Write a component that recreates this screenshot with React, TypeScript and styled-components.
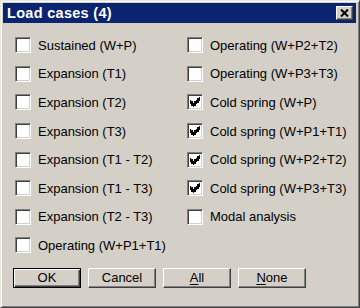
import {createGlobalStyle} from 'styled-components';
import styled from 'styled-components';

const GlobalStyle = createGlobalStyle`
	html, body {
		margin     : 0;
		padding    : 0;
		background : #d4d0c8;
	}
	body {
		font-family : "Liberation Sans", Arial, sans-serif;
	}
`;

const Window = styled.div`
	display          : flex;
	flex-direction   : column;
	box-sizing       : border-box;
	width            : 360px;
	height           : 308px;
	background-color : #d4d0c8;
	border-top       : 1px solid #e8e6e1;
	border-left      : 1px solid #e8e6e1;
	border-right     : 1px solid #404040;
	border-bottom    : 1px solid #404040;
	box-shadow       : inset 1px 1px 0 #ffffff, inset -1px -1px 0 #808080;
	padding          : 2px 3px 3px 2px;
`;

const TitleBar = styled.div`
	display          : flex;
	align-items      : center;
	justify-content  : space-between;
	height           : 20px;
	padding          : 0 3px 0 4px;
	background-color : #0b2470;
	color            : #ffffff;
`;

const Title = styled.span`
	font-size      : 14.5px;
	font-weight    : bold;
	letter-spacing : 0.3px;
`;

const CloseButton = styled.div`
	display          : flex;
	align-items      : center;
	justify-content  : center;
	width            : 17px;
	height           : 14px;
	background-color : #d4d0c8;
	border-top       : 1px solid #ffffff;
	border-left      : 1px solid #ffffff;
	border-right     : 1px solid #404040;
	border-bottom    : 1px solid #404040;
	box-shadow       : inset -1px -1px 0 #808080;
	box-sizing       : border-box;
`;

const Body = styled.div`
	display               : grid;
	grid-template-columns : 172px 1fr;
	padding               : 8px 0 0 12px;
`;

const Column = styled.div`
	display        : flex;
	flex-direction : column;
`;

const Row = styled.label`
	display     : flex;
	align-items : center;
	gap         : 7px;
	height      : 28.6px;
	font-size   : 13px;
	color       : #000000;
	white-space : nowrap;
`;

const Box = styled.span`
	display          : flex;
	align-items      : center;
	justify-content  : center;
	box-sizing       : border-box;
	width            : 16px;
	height           : 16px;
	background-color : #ffffff;
	border-top       : 1px solid #808080;
	border-left      : 1px solid #808080;
	border-right     : 1px solid #ffffff;
	border-bottom    : 1px solid #ffffff;
	box-shadow       : inset 1px 1px 0 #404040, inset -1px -1px 0 #d4d0c8;
`;

const ButtonBar = styled.div`
	display : flex;
	gap     : 7px;
	padding : 8px 0 0 10px;
`;

const PushButton = styled.div<{ $default?: boolean }>`
	display          : flex;
	align-items      : center;
	justify-content  : center;
	box-sizing       : border-box;
	width            : 68px;
	height           : 20px;
	font-size        : 13px;
	color            : #000000;
	background-color : #d4d0c8;
	border-style     : solid;
	border-width     : 1px;
	border-color     : ${({$default}) => $default ? '#000000' : '#ffffff #404040 #404040 #ffffff'};
	box-shadow       : ${({$default}) => $default
		? 'inset 1px 1px 0 #ffffff, inset -1px -1px 0 #404040, inset -2px -2px 0 #808080'
		: 'inset -1px -1px 0 #808080'};
`;

const Mnemonic = styled.u`
	text-decoration       : underline;
	text-underline-offset : 2px;
`;

const Check = () => <svg width="10" height="10" viewBox="0 0 7 7" shapeRendering="crispEdges">
	<path d="M0 2h1v1h1v1h1v-1h1v-1h1v-1h1v-1h1v3h-1v1h-1v1h-1v1h-1v1h-1v-1h-1v-1h-1v-1h-1z" fill="#000"/>
</svg>;

const CheckItem = (props: { label: string; checked?: boolean }) => {
	const {label, checked = false} = props;
	return <Row>
		<Box>{checked ? <Check/> : null}</Box>
		<span>{label}</span>
	</Row>;
};

const left = [
	'Sustained (W+P)',
	'Expansion (T1)',
	'Expansion (T2)',
	'Expansion (T3)',
	'Expansion (T1 - T2)',
	'Expansion (T1 - T3)',
	'Expansion (T2 - T3)',
	'Operating (W+P1+T1)'
];

const right = [
	{label: 'Operating (W+P2+T2)', checked: false},
	{label: 'Operating (W+P3+T3)', checked: false},
	{label: 'Cold spring (W+P)', checked: true},
	{label: 'Cold spring (W+P1+T1)', checked: true},
	{label: 'Cold spring (W+P2+T2)', checked: true},
	{label: 'Cold spring (W+P3+T3)', checked: true},
	{label: 'Modal analysis', checked: false}
];

export default function App() {
	return <>
		<GlobalStyle/>
		<Window>
			<TitleBar>
				<Title>Load cases (4)</Title>
				<CloseButton>
					<svg width="9" height="8" viewBox="0 0 9 8">
						<path d="M1 0.5L8 7.5M8 0.5L1 7.5" stroke="#000" strokeWidth="2"/>
					</svg>
				</CloseButton>
			</TitleBar>
			<Body>
				<Column>
					{left.map(label => <CheckItem key={label} label={label}/>)}
				</Column>
				<Column>
					{right.map(item => <CheckItem key={item.label} label={item.label} checked={item.checked}/>)}
				</Column>
			</Body>
			<ButtonBar>
				<PushButton $default>OK</PushButton>
				<PushButton>Cancel</PushButton>
				<PushButton><Mnemonic>A</Mnemonic>ll</PushButton>
				<PushButton><Mnemonic>N</Mnemonic>one</PushButton>
			</ButtonBar>
		</Window>
	</>;
}
